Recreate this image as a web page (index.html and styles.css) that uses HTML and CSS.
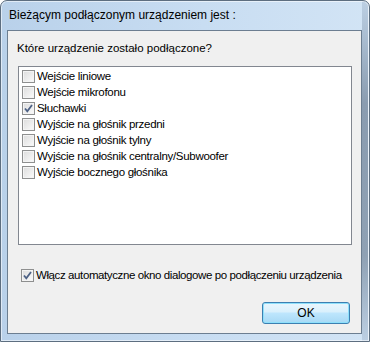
FILE: index.html
```html
<!DOCTYPE html>
<html lang="pl">
<head>
  <meta charset="UTF-8">
  <title>Bieżącym podłączonym urządzeniem jest :</title>
  <link rel="stylesheet" href="styles.css">
</head>
<body>

<div class="window">
  <div class="title">Bieżącym podłączonym urządzeniem jest :</div>

  <div class="client">
    <div class="label">Które urządzenie zostało podłączone?</div>

    <div class="list">
      <div class="item"><span class="box"></span>Wejście liniowe</div>
      <div class="item"><span class="box"></span>Wejście mikrofonu</div>
      <div class="item"><span class="box checked"><svg viewBox="0 0 11 11"><path d="M2 5.5 L4.3 8.3 L9 2"/></svg></span>Słuchawki</div>
      <div class="item"><span class="box"></span>Wyjście na głośnik przedni</div>
      <div class="item"><span class="box"></span>Wyjście na głośnik tylny</div>
      <div class="item"><span class="box"></span>Wyjście na głośnik centralny/Subwoofer</div>
      <div class="item"><span class="box"></span>Wyjście bocznego głośnika</div>
    </div>

    <div class="auto">
      <span class="box checked"><svg viewBox="0 0 11 11"><path d="M2 5.5 L4.3 8.3 L9 2"/></svg></span>Włącz automatyczne okno dialogowe po podłączeniu urządzenia
    </div>

    <div class="buttons">
      <button class="ok">OK</button>
    </div>
  </div>
</div>

</body>
</html>
```

FILE: styles.css
```css
body {
  margin: 0;
  padding: 0;
  font-family: "Liberation Sans", Arial, sans-serif;
  font-size: 11.5px;
  color: #000;
  background: #fff;
}

.window {
  width: 370px;
  height: 342px;
  box-sizing: border-box;
  border: 1px solid #5d6e80;
  border-radius: 7px 7px 0 0;
  box-shadow: inset 0 0 0 1px rgba(255, 255, 255, 0.55);
  background:
    linear-gradient(to bottom, #bccfe3, #8a9cb0 30%, #8fa1b4 75%, #bccfe3) right 1px top 0 / 6px 100% no-repeat,
    linear-gradient(to right, #b9d1ea, #c8ddf2 55%, #d2e4f5);
  display: flex;
  flex-direction: column;
  padding: 0 7px 7px 6px;
}

.title {
  height: 29px;
  line-height: 28px;
  padding-left: 2px;
  font-size: 12px;
  white-space: nowrap;
}

.client {
  flex: 1;
  border: 1px solid #6c7e91;
  background: #f0f0f0;
  display: flex;
  flex-direction: column;
}

.label {
  margin: 10px 0 0 9px;
  line-height: 14px;
}

.list {
  margin: 11px 0 0 10px;
  width: 334px;
  height: 179px;
  box-sizing: border-box;
  border: 1px solid #828790;
  background: #fff;
  padding: 1px 0 0 3px;
}

.item {
  height: 16px;
  display: flex;
  align-items: center;
  white-space: nowrap;
  letter-spacing: -0.3px;
}

.box {
  width: 13px;
  height: 13px;
  box-sizing: border-box;
  border: 1px solid #8e8f8f;
  background: linear-gradient(135deg, #dcdcdc, #fbfbfb);
  box-shadow: inset 0 0 0 1px #f4f4f4;
  margin-right: 2px;
  flex-shrink: 0;
  display: flex;
  align-items: center;
  justify-content: center;
}

.box svg {
  width: 11px;
  height: 11px;
}

.box svg path {
  fill: none;
  stroke: #4d6185;
  stroke-width: 1.8;
}

.auto {
  margin: 22px 0 0 13px;
  height: 16px;
  display: flex;
  align-items: center;
  white-space: nowrap;
  letter-spacing: -0.4px;
}

.buttons {
  margin-top: 19px;
  display: flex;
  justify-content: flex-end;
  padding-right: 11px;
}

.ok {
  width: 88px;
  height: 22px;
  font-family: inherit;
  font-size: 12px;
  color: #000;
  border: 1px solid #3c7fb1;
  border-radius: 3px;
  background: linear-gradient(to bottom, #eaf6fd 0%, #d9f0fc 45%, #bee6fd 50%, #a7d9f5 100%);
  box-shadow: inset 0 0 0 1px #8ee0fb;
  padding: 0;
}
```
